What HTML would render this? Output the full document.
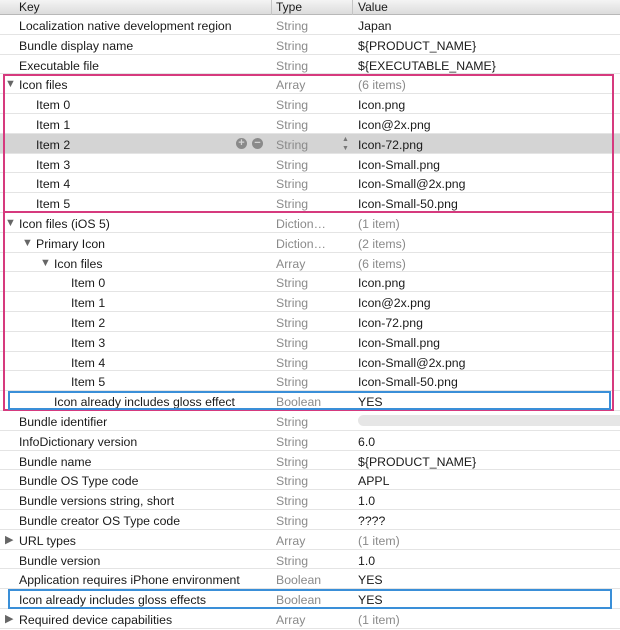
<!DOCTYPE html>
<html><head><meta charset="utf-8"><style>
*{margin:0;padding:0;box-sizing:border-box}
body{width:620px;height:625px;overflow:hidden;background:#fff;font-family:"Liberation Sans",Arial,sans-serif;font-size:12.3px;color:#1a1a1a;position:relative}
.hd{height:15px;background:linear-gradient(#f4f4f4,#dcdcdc);border-bottom:1px solid #b8b8b8;position:relative;font-size:12px;line-height:14px}
.hd span{position:absolute;top:0}
.hd .d{position:absolute;top:0;width:1px;height:15px;background:#c4c4c4}
.r{height:19.8px;border-bottom:1px solid #e4e4e4;position:relative;line-height:19px;white-space:nowrap}
.r span{position:absolute;top:2px}
.t{left:276px;color:#8a8a8a}
.v{left:358px}
.g{color:#8a8a8a}
.sel{background:#d4d4d4}
.r span.tri{font-size:11px;color:#666;top:1px}
.box{position:absolute;border-style:solid;border-width:2px}
</style></head><body>
<div class="hd"><span style="left:19px">Key</span><div class="d" style="left:271px"></div><span style="left:276px">Type</span><div class="d" style="left:352px"></div><span style="left:358px">Value</span></div>
<div class="r"><span style="left:19px">Localization native development region</span><span class="t">String</span><span class="v">Japan</span></div>
<div class="r"><span style="left:19px">Bundle display name</span><span class="t">String</span><span class="v">${PRODUCT_NAME}</span></div>
<div class="r"><span style="left:19px">Executable file</span><span class="t">String</span><span class="v">${EXECUTABLE_NAME}</span></div>
<div class="r"><span class="tri" style="left:5px">▼</span><span style="left:19px">Icon files</span><span class="t">Array</span><span class="v g">(6 items)</span></div>
<div class="r"><span style="left:36px">Item 0</span><span class="t">String</span><span class="v">Icon.png</span></div>
<div class="r"><span style="left:36px">Item 1</span><span class="t">String</span><span class="v">Icon@2x.png</span></div>
<div class="r sel"><span style="left:236px;top:4px;width:11px;height:11px;border-radius:50%;background:#8a8a8a;color:#d4d4d4;font-size:11px;line-height:11px;text-align:center;font-weight:bold">+</span><span style="left:252px;top:4px;width:11px;height:11px;border-radius:50%;background:#8a8a8a;color:#d4d4d4;font-size:11px;line-height:10px;text-align:center;font-weight:bold">−</span><span style="left:36px">Item 2</span><span class="t">String</span><span style="left:342px;top:1px;font-size:7px;line-height:9px;color:#777">▲<br>▼</span><span class="v">Icon-72.png</span></div>
<div class="r"><span style="left:36px">Item 3</span><span class="t">String</span><span class="v">Icon-Small.png</span></div>
<div class="r"><span style="left:36px">Item 4</span><span class="t">String</span><span class="v">Icon-Small@2x.png</span></div>
<div class="r"><span style="left:36px">Item 5</span><span class="t">String</span><span class="v">Icon-Small-50.png</span></div>
<div class="r"><span class="tri" style="left:5px">▼</span><span style="left:19px">Icon files (iOS 5)</span><span class="t">Diction…</span><span class="v g">(1 item)</span></div>
<div class="r"><span class="tri" style="left:22px">▼</span><span style="left:36px">Primary Icon</span><span class="t">Diction…</span><span class="v g">(2 items)</span></div>
<div class="r"><span class="tri" style="left:40px">▼</span><span style="left:54px">Icon files</span><span class="t">Array</span><span class="v g">(6 items)</span></div>
<div class="r"><span style="left:71px">Item 0</span><span class="t">String</span><span class="v">Icon.png</span></div>
<div class="r"><span style="left:71px">Item 1</span><span class="t">String</span><span class="v">Icon@2x.png</span></div>
<div class="r"><span style="left:71px">Item 2</span><span class="t">String</span><span class="v">Icon-72.png</span></div>
<div class="r"><span style="left:71px">Item 3</span><span class="t">String</span><span class="v">Icon-Small.png</span></div>
<div class="r"><span style="left:71px">Item 4</span><span class="t">String</span><span class="v">Icon-Small@2x.png</span></div>
<div class="r"><span style="left:71px">Item 5</span><span class="t">String</span><span class="v">Icon-Small-50.png</span></div>
<div class="r"><span style="left:54px">Icon already includes gloss effect</span><span class="t">Boolean</span><span class="v">YES</span></div>
<div class="r"><span style="left:19px">Bundle identifier</span><span class="t">String</span><span style="left:358px;top:4px;width:270px;height:11px;border-radius:6px;background:#e6e6e6"></span></div>
<div class="r"><span style="left:19px">InfoDictionary version</span><span class="t">String</span><span class="v">6.0</span></div>
<div class="r"><span style="left:19px">Bundle name</span><span class="t">String</span><span class="v">${PRODUCT_NAME}</span></div>
<div class="r"><span style="left:19px">Bundle OS Type code</span><span class="t">String</span><span class="v">APPL</span></div>
<div class="r"><span style="left:19px">Bundle versions string, short</span><span class="t">String</span><span class="v">1.0</span></div>
<div class="r"><span style="left:19px">Bundle creator OS Type code</span><span class="t">String</span><span class="v">????</span></div>
<div class="r"><span class="tri" style="left:5px">▶</span><span style="left:19px">URL types</span><span class="t">Array</span><span class="v g">(1 item)</span></div>
<div class="r"><span style="left:19px">Bundle version</span><span class="t">String</span><span class="v">1.0</span></div>
<div class="r"><span style="left:19px;width:229px;overflow:hidden">Application requires iPhone environment</span><span class="t">Boolean</span><span class="v">YES</span></div>
<div class="r"><span style="left:19px">Icon already includes gloss effects</span><span class="t">Boolean</span><span class="v">YES</span></div>
<div class="r"><span class="tri" style="left:5px">▶</span><span style="left:19px">Required device capabilities</span><span class="t">Array</span><span class="v g">(1 item)</span></div>
<div class="box" style="left:3px;top:74px;width:611px;height:139px;border-color:#d63a7e"></div>
<div class="box" style="left:3px;top:211px;width:611px;height:200px;border-color:#d63a7e"></div>
<div class="box" style="left:8px;top:391px;width:603px;height:19px;border-color:#3a8fd8"></div>
<div class="box" style="left:8px;top:589px;width:604px;height:20px;border-color:#3a8fd8"></div>
</body></html>
